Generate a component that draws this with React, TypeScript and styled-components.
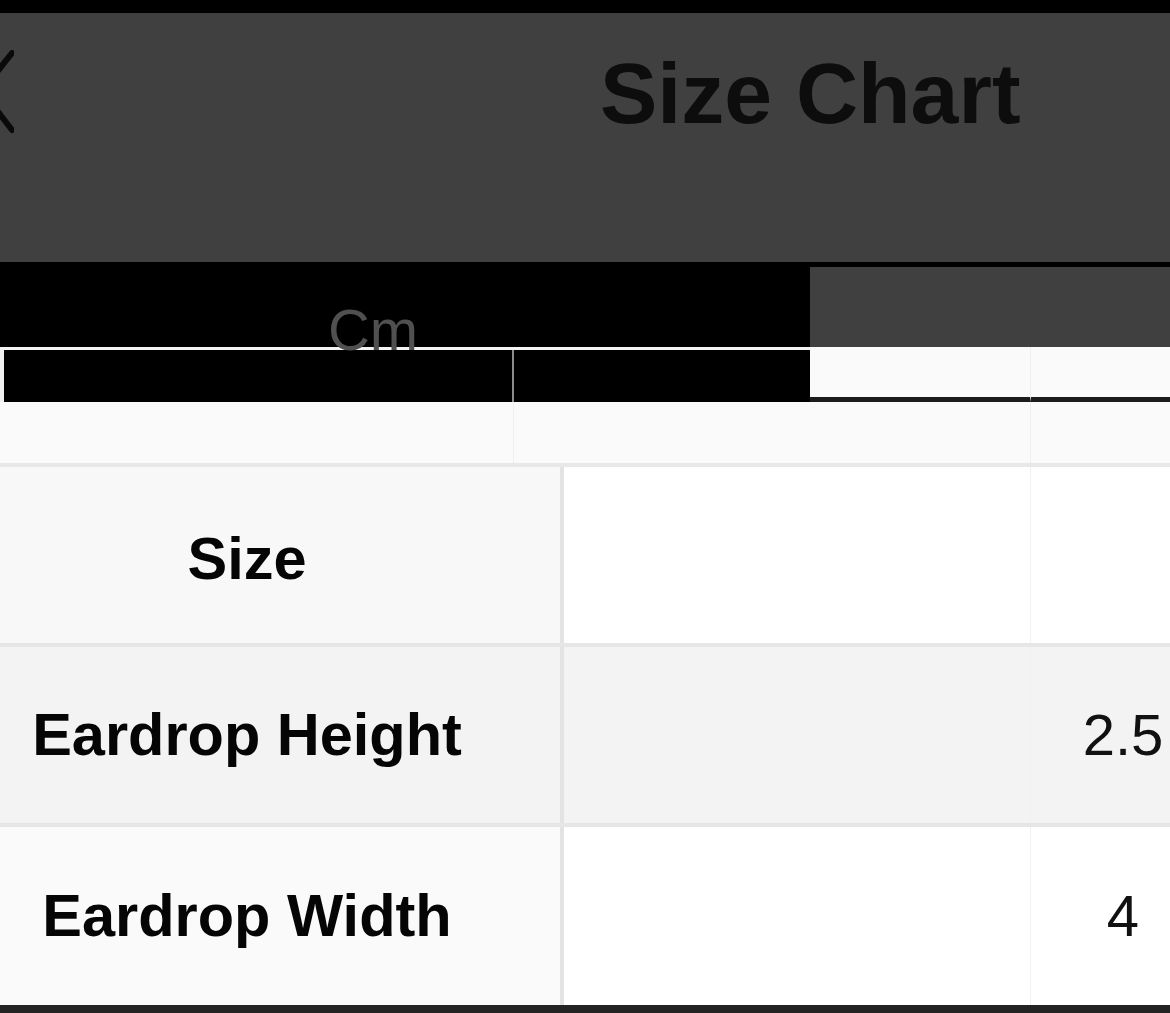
import React from "react";
import styled, { createGlobalStyle } from "styled-components";

const GlobalStyle = createGlobalStyle`
  html, body { margin: 0; padding: 0; background: #000; overflow: hidden; }
  body { font-family: "Liberation Sans", Arial, Helvetica, sans-serif; }
  * { box-sizing: border-box; }
`;

const Screen = styled.div`
  width: 1170px;
  height: 1013px;
  overflow: hidden;
  display: flex;
  flex-direction: column;
  background: #000;
`;

const StatusStrip = styled.div`
  height: 13px;
  flex-shrink: 0;
  background: #000;
`;

const Header = styled.header`
  height: 249px;
  flex-shrink: 0;
  background: #404040;
  display: flex;
  align-items: flex-start;
  padding-top: 37px;
`;

const CloseIcon = styled.svg`
  width: 14px;
  height: 86px;
  flex-shrink: 0;
  overflow: hidden;
`;

const Title = styled.h1`
  margin: 0 0 0 586px;
  font-size: 86px;
  line-height: 86px;
  font-weight: 700;
  color: #0d0d0d;
  white-space: nowrap;
`;

const TabBar = styled.div`
  height: 85px;
  flex-shrink: 0;
  background: #000;
  padding-top: 5px;
  display: flex;
`;

const Tab = styled.div<{ $active?: boolean }>`
  height: 80px;
  flex: ${(p) => (p.$active ? "0 0 810px" : "1")};
  background: ${(p) => (p.$active ? "#000" : "#404040")};
  display: flex;
  justify-content: center;
  align-items: flex-start;
  padding-top: 34px;
  padding-right: ${(p) => (p.$active ? "64px" : "0")};
  overflow: visible;
`;

const TabLabel = styled.span`
  position: relative;
  z-index: 1;
  font-size: 58px;
  line-height: 58px;
  color: #505050;
`;

const Table = styled.div`
  width: 1215px;
  flex-shrink: 0;
  display: flex;
  flex-direction: column;
`;

const UnitRow = styled.div`
  height: 55px;
  display: grid;
  grid-template-columns: 514px 296px 221px 184px;
  background: #f4f4f4;
`;

const UnitCell = styled.div<{ $dark?: boolean; $first?: boolean; $divider?: boolean }>`
  background: ${(p) => (p.$dark ? "#000" : "#fafafa")};
  margin-top: ${(p) => (p.$dark ? "3px" : "0")};
  border-left: ${(p) => (p.$first ? "4px solid #f0f0f0" : "none")};
  border-right: ${(p) =>
    p.$divider ? (p.$dark ? "2px solid #8c8c8c" : "1px solid #efefef") : "none"};
  border-bottom: ${(p) => (p.$dark ? "none" : "5px solid #1c1c1c")};
`;

const SpacerRow = styled.div`
  height: 65px;
  display: grid;
  grid-template-columns: 514px 296px 221px 184px;
  background: #fafafa;
  border-bottom: 4px solid #e8e8e8;
`;

const SpacerCell = styled.div<{ $divider?: boolean }>`
  border-right: ${(p) => (p.$divider ? "1px solid #f0f0f0" : "none")};
`;

const DataRow = styled.div<{ $height: number; $last?: boolean }>`
  height: ${(p) => p.$height}px;
  display: grid;
  grid-template-columns: 564px 467px 184px;
  border-bottom: ${(p) => (p.$last ? "none" : "4px solid #e6e6e6")};
`;

const LabelCell = styled.div<{ $bg: string; $shift?: number }>`
  background: ${(p) => p.$bg};
  border-right: 4px solid #e3e3e3;
  display: flex;
  align-items: center;
  justify-content: center;
  padding: ${(p) => p.$shift || 0}px 70px 0 4px;
  font-size: 59.5px;
  line-height: 60px;
  font-weight: 700;
  color: #050505;
  white-space: nowrap;
`;

const GapCell = styled.div<{ $bg: string }>`
  background: ${(p) => p.$bg};
  border-right: 1px solid #f1f1f1;
`;

const ValueCell = styled.div<{ $bg: string }>`
  background: ${(p) => p.$bg};
  display: flex;
  align-items: center;
  justify-content: center;
  font-size: 58px;
  line-height: 58px;
  color: #111;
  white-space: nowrap;
`;

const BottomBar = styled.div`
  flex: 1;
  background: #232323;
`;

const rows = [
  { label: "Size", value: "", left: "#f8f8f8", right: "#ffffff", height: 180, shift: 7 },
  { label: "Eardrop Height", value: "2.5", left: "#f3f3f3", right: "#f3f3f3", height: 180, shift: 0 },
  { label: "Eardrop Width", value: "4", left: "#fafafa", right: "#ffffff", height: 178, shift: 0 },
];

export default function App() {
  return (
    <>
      <GlobalStyle />
      <Screen>
        <StatusStrip />
        <Header>
          <CloseIcon viewBox="0 0 14 86">
            <path
              d="M12 3 L-18 41 L12 80"
              fill="none"
              stroke="#0a0a0a"
              strokeWidth="6"
              strokeLinecap="round"
              strokeLinejoin="round"
            />
          </CloseIcon>
          <Title>Size Chart</Title>
        </Header>
        <TabBar>
          <Tab $active>
            <TabLabel>Cm</TabLabel>
          </Tab>
          <Tab />
        </TabBar>
        <Table>
          <UnitRow>
            <UnitCell $dark $first $divider />
            <UnitCell $dark />
            <UnitCell $divider />
            <UnitCell />
          </UnitRow>
          <SpacerRow>
            <SpacerCell $divider />
            <SpacerCell />
            <SpacerCell $divider />
            <SpacerCell />
          </SpacerRow>
          {rows.map((r, i) => (
            <DataRow key={r.label} $height={r.height} $last={i === rows.length - 1}>
              <LabelCell $bg={r.left} $shift={r.shift}>
                {r.label}
              </LabelCell>
              <GapCell $bg={r.right} />
              <ValueCell $bg={r.right}>{r.value}</ValueCell>
            </DataRow>
          ))}
        </Table>
        <BottomBar />
      </Screen>
    </>
  );
}
